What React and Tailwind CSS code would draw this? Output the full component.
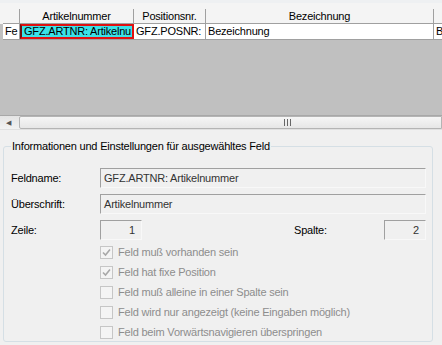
import React from "react";

const cols = [
  { w: 17, head: "", cell: "Fe" },
  { w: 114, head: "Artikelnummer", cell: "GFZ.ARTNR: Artikelnu", active: true },
  { w: 72, head: "Positionsnr.", cell: "GFZ.POSNR:" },
  { w: 228, head: "Bezeichnung", cell: "Bezeichnung" },
  { w: 40, head: "", cell: "B" },
];

const checks = [
  { label: "Feld muß vorhanden sein", checked: true },
  { label: "Feld hat fixe Position", checked: true },
  { label: "Feld muß alleine in einer Spalte sein" },
  { label: "Feld wird nur angezeigt (keine Eingaben möglich)" },
  { label: "Feld beim Vorwärtsnavigieren überspringen" },
];

function Field({ value, className = "", right }) {
  return (
    <div
      className={`h-[20px] border border-t-[#a0a0a0] border-l-[#a0a0a0] border-b-[#f8f8f8] border-r-[#f8f8f8] bg-[#f0f0f0] flex items-center px-[3px] text-[#333] ${right ? "justify-end" : ""} ${className}`}
    >
      {value}
    </div>
  );
}

function Check({ label, checked }) {
  return (
    <div className="h-[20px] flex items-center gap-[5px] text-[#8d8d8d]">
      <div className="w-[13px] h-[13px] border border-[#c6c6c6] bg-[#f4f4f4] flex items-center justify-center">
        {checked && (
          <svg width="9" height="9" viewBox="0 0 9 9">
            <path d="M1 4.5 L3.5 7 L8 1.5" fill="none" stroke="#a8a8a8" strokeWidth="1.6" />
          </svg>
        )}
      </div>
      <span>{label}</span>
    </div>
  );
}

export default function App() {
  return (
    <div
      className="w-[442px] h-[345px] overflow-hidden bg-[#f0f0f0] text-[11px] tracking-[-0.2px] text-black leading-none"
      style={{ fontFamily: "'Liberation Sans', Arial, sans-serif" }}
    >
      <div className="h-[130px] flex flex-col border-t-[3px] border-[#eef0f2]">
        <div className="flex pl-[3px] bg-[#c0c0c0] flex-col flex-1 min-h-0">
          <div className="-ml-[3px] pl-[3px] bg-[#f4f4f4] flex flex-col">
            <div className="h-[6px]" />
            <div className="flex h-[15px]">
              {cols.map((c, i) => (
                <div
                  key={i}
                  className="shrink-0 flex items-center justify-center border-r border-b border-[#a0a0a0]"
                  style={{ width: c.w }}
                >
                  {c.head}
                </div>
              ))}
            </div>
          </div>
          <div className="flex h-[16px] bg-white border-b border-[#a0a0a0]">
            {cols.map((c, i) =>
              c.active ? (
                <div
                  key={i}
                  className="shrink-0 flex items-center pl-[2px] bg-[#3be2e8] border-2 border-[#e01010] border-l-[#701010] overflow-hidden whitespace-nowrap"
                  style={{ width: c.w }}
                >
                  {c.cell}
                </div>
              ) : (
                <div
                  key={i}
                  className="shrink-0 flex items-center pl-[2px] border-r border-[#a0a0a0] overflow-hidden whitespace-nowrap"
                  style={{ width: c.w }}
                >
                  {c.cell}
                </div>
              )
            )}
          </div>
          <div className="flex-1" />
        </div>
        <div className="h-[15px] flex border-t border-[#a8a8a8] bg-gradient-to-b from-[#e4e4e4] to-[#f2f2f2] border-b border-b-[#e0e0e0]">
          <div className="w-[17px] flex items-center justify-center text-[#555] text-[7px]">◀</div>
          <div className="flex-1 ml-[2px] border border-[#b4b4b4] rounded-l-[2px] bg-gradient-to-b from-[#f6f6f6] to-[#e6e6e6] flex items-center pl-[264px]">
            <div className="flex gap-[2px]">
              <div className="w-[1px] h-[7px] bg-[#666]" />
              <div className="w-[1px] h-[7px] bg-[#666]" />
              <div className="w-[1px] h-[7px] bg-[#666]" />
            </div>
          </div>
        </div>
      </div>

      <fieldset className="ml-[3px] mt-[11px] w-[430px] h-[201px] border border-[#d5dfe5] rounded-[3px] px-[6px]">
        <legend className="ml-[1px] px-[1px]">Informationen und Einstellungen für ausgewähltes Feld</legend>
        <div className="flex flex-col mt-[16px] pl-[1px]">
          <div className="flex items-center h-[20px]">
            <span className="w-[89px]">Feldname:</span>
            <Field value="GFZ.ARTNR: Artikelnummer" className="w-[326px]" />
          </div>
          <div className="flex items-center h-[20px] mt-[6px]">
            <span className="w-[89px]">Überschrift:</span>
            <Field value="Artikelnummer" className="w-[326px]" />
          </div>
          <div className="flex items-center h-[20px] mt-[6px]">
            <span className="w-[89px]">Zeile:</span>
            <Field value="1" right className="w-[42px] pr-[6px]" />
            <span className="ml-[152px] w-[90px]">Spalte:</span>
            <Field value="2" right className="w-[42px] pr-[6px]" />
          </div>
          <div className="flex flex-col pl-[89px] mt-[2px]">
            {checks.map((c) => (
              <Check key={c.label} {...c} />
            ))}
          </div>
        </div>
      </fieldset>
    </div>
  );
}
